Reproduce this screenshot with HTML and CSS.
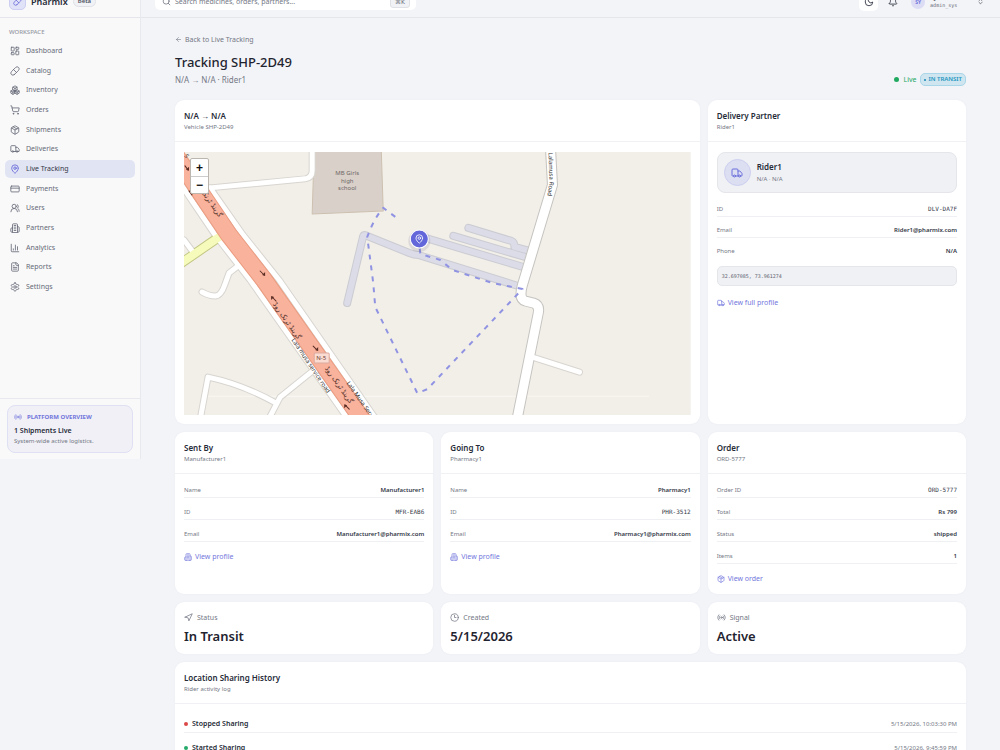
FILE: index.html
```html
<!DOCTYPE html>
<html lang="en">
<head>
<meta charset="utf-8">
<meta name="viewport" content="width=device-width, initial-scale=1">
<title>Pharmix - Live Tracking</title>
<link rel="stylesheet" href="styles.css">
</head>
<body>
<svg class="sprite" aria-hidden="true">
  <symbol id="i-dash" viewBox="0 0 24 24"><rect x="3" y="3" width="7" height="9" rx="1"/><rect x="14" y="3" width="7" height="5" rx="1"/><rect x="14" y="12" width="7" height="9" rx="1"/><rect x="3" y="16" width="7" height="5" rx="1"/></symbol>
  <symbol id="i-pill" viewBox="0 0 24 24"><path d="m10.5 20.5 10-10a4.95 4.95 0 1 0-7-7l-10 10a4.95 4.95 0 1 0 7 7Z"/><path d="m8.500 8.500 7 7"/></symbol>
  <symbol id="i-boxes" viewBox="0 0 24 24"><path d="M3 13.900 7 11.500l5 3v5l-5 3-5-3v-4.500zM7 17l-4.500-2.500M7 17l5-2.500M7 17v5M12 14.500l5-3 5 3v5l-5 3-5-3zM17 17l-5-2.500M17 17l5-2.500M17 17v5M7 5l5-3 5 3v6.500l-5 3-5-3zM12 8 7.300 5.200M12 8l4.700-2.800M12 14V8"/></symbol>
  <symbol id="i-cart" viewBox="0 0 24 24"><circle cx="8" cy="21" r="1"/><circle cx="19" cy="21" r="1"/><path d="M2 2h2l2.700 12.400a2 2 0 0 0 2 1.600h9.800a2 2 0 0 0 2-1.600L22 7H5.100"/></symbol>
  <symbol id="i-package" viewBox="0 0 24 24"><path d="m7.500 4.300 9 5.100"/><path d="M21 8a2 2 0 0 0-1-1.700l-7-4a2 2 0 0 0-2 0l-7 4A2 2 0 0 0 3 8v8a2 2 0 0 0 1 1.700l7 4a2 2 0 0 0 2 0l7-4a2 2 0 0 0 1-1.700Z"/><path d="m3.300 7 8.700 5 8.700-5M12 22V12"/></symbol>
  <symbol id="i-truck" viewBox="0 0 24 24"><path d="M14 18V6a2 2 0 0 0-2-2H4a2 2 0 0 0-2 2v11a1 1 0 0 0 1 1h2M15 18H9M19 18h2a1 1 0 0 0 1-1v-3.600a1 1 0 0 0-.2-.6l-3.500-4.400A1 1 0 0 0 17.500 8H14"/><circle cx="17" cy="18" r="2"/><circle cx="7" cy="18" r="2"/></symbol>
  <symbol id="i-pin" viewBox="0 0 24 24"><path d="M20 10c0 5-5.500 10.200-7.400 11.800a1 1 0 0 1-1.200 0C9.500 20.200 4 15 4 10a8 8 0 0 1 16 0"/><circle cx="12" cy="10" r="3"/></symbol>
  <symbol id="i-card" viewBox="0 0 24 24"><rect x="2" y="5" width="20" height="14" rx="2"/><path d="M2 10h20"/></symbol>
  <symbol id="i-users" viewBox="0 0 24 24"><path d="M18 21a8 8 0 0 0-16 0"/><circle cx="10" cy="8" r="5"/><path d="M22 20c0-3.400-2-6.500-4-8a5 5 0 0 0-.5-8.300"/></symbol>
  <symbol id="i-building" viewBox="0 0 24 24"><path d="M6 22V4a2 2 0 0 1 2-2h8a2 2 0 0 1 2 2v18ZM6 12H4a2 2 0 0 0-2 2v6a2 2 0 0 0 2 2h2M18 9h2a2 2 0 0 1 2 2v9a2 2 0 0 1-2 2h-2M10 6h4M10 10h4M10 14h4M10 18h4"/></symbol>
  <symbol id="i-chart" viewBox="0 0 24 24"><path d="M3 3v16a2 2 0 0 0 2 2h16M18 17V9M13 17V5M8 17v-3"/></symbol>
  <symbol id="i-file" viewBox="0 0 24 24"><path d="M15 2H6a2 2 0 0 0-2 2v16a2 2 0 0 0 2 2h12a2 2 0 0 0 2-2V7Z"/><path d="M14 2v4a2 2 0 0 0 2 2h4M10 9H8M16 13H8M16 17H8"/></symbol>
  <symbol id="i-gear" viewBox="0 0 24 24"><path d="M12.200 2h-.4a2 2 0 0 0-2 2v.2a2 2 0 0 1-1 1.700l-.4.300a2 2 0 0 1-2 0l-.2-.1a2 2 0 0 0-2.700.7l-.2.400a2 2 0 0 0 .7 2.700l.2.100a2 2 0 0 1 1 1.700v.5a2 2 0 0 1-1 1.800l-.2.100a2 2 0 0 0-.7 2.700l.2.400a2 2 0 0 0 2.700.7l.2-.1a2 2 0 0 1 2 0l.4.300a2 2 0 0 1 1 1.700v.2a2 2 0 0 0 2 2h.4a2 2 0 0 0 2-2v-.2a2 2 0 0 1 1-1.700l.4-.3a2 2 0 0 1 2 0l.2.100a2 2 0 0 0 2.700-.7l.2-.4a2 2 0 0 0-.7-2.700l-.2-.1a2 2 0 0 1-1-1.700v-.5a2 2 0 0 1 1-1.800l.2-.1a2 2 0 0 0 .7-2.700l-.2-.4a2 2 0 0 0-2.700-.7l-.2.100a2 2 0 0 1-2 0l-.4-.3a2 2 0 0 1-1-1.700V4a2 2 0 0 0-2-2z"/><circle cx="12" cy="12" r="3"/></symbol>
  <symbol id="i-radio" viewBox="0 0 24 24"><path d="M4.900 19.100C1 15.200 1 8.800 4.900 4.900M7.800 16.200c-2.300-2.300-2.300-6.100 0-8.500M16.200 7.800c2.300 2.300 2.300 6.100 0 8.500M19.100 4.900C23 8.800 23 15.100 19.100 19"/><circle cx="12" cy="12" r="2"/></symbol>
  <symbol id="i-nav" viewBox="0 0 24 24"><path d="m3 11 19-9-9 19-2-8-8-2z"/></symbol>
  <symbol id="i-clock" viewBox="0 0 24 24"><circle cx="12" cy="12" r="10"/><path d="M12 6v6h4"/></symbol>
  <symbol id="i-left" viewBox="0 0 24 24"><path d="m12 19-7-7 7-7M19 12H5"/></symbol>
  <symbol id="i-moon" viewBox="0 0 24 24"><path d="M12 3a6 6 0 0 0 9 9 9 9 0 1 1-9-9Z"/></symbol>
  <symbol id="i-bell" viewBox="0 0 24 24"><path d="M10.300 21a2 2 0 0 0 3.400 0M3.300 15.300A1 1 0 0 0 4 17h16a1 1 0 0 0 .7-1.700C19.400 14 18 12.500 18 8A6 6 0 0 0 6 8c0 4.500-1.400 6-2.700 7.300"/></symbol>
  <symbol id="i-search" viewBox="0 0 24 24"><circle cx="11" cy="11" r="8"/><path d="m21 21-4.300-4.300"/></symbol>
  <symbol id="i-updown" viewBox="0 0 24 24"><path d="m7 15 5 5 5-5M7 9l5-5 5 5"/></symbol>
</svg>

<div class="shell">
  <aside class="sidebar">
    <div class="brand">
      <span class="logo"><svg class="icon"><use href="#i-pill"/></svg></span>
      <strong>Pharmix</strong><span class="beta">Beta</span>
    </div>
    <h2 class="nav-title">WORKSPACE</h2>
    <nav class="nav">
      <a href="#"><svg class="icon"><use href="#i-dash"/></svg>Dashboard</a>
      <a href="#"><svg class="icon"><use href="#i-pill"/></svg>Catalog</a>
      <a href="#"><svg class="icon"><use href="#i-boxes"/></svg>Inventory</a>
      <a href="#"><svg class="icon"><use href="#i-cart"/></svg>Orders</a>
      <a href="#"><svg class="icon"><use href="#i-package"/></svg>Shipments</a>
      <a href="#"><svg class="icon"><use href="#i-truck"/></svg>Deliveries</a>
      <a href="#" class="active" aria-current="page"><svg class="icon"><use href="#i-pin"/></svg>Live Tracking</a>
      <a href="#"><svg class="icon"><use href="#i-card"/></svg>Payments</a>
      <a href="#"><svg class="icon"><use href="#i-users"/></svg>Users</a>
      <a href="#"><svg class="icon"><use href="#i-building"/></svg>Partners</a>
      <a href="#"><svg class="icon"><use href="#i-chart"/></svg>Analytics</a>
      <a href="#"><svg class="icon"><use href="#i-file"/></svg>Reports</a>
      <a href="#"><svg class="icon"><use href="#i-gear"/></svg>Settings</a>
    </nav>
    <div class="side-foot">
      <section class="overview">
        <h3><svg class="icon"><use href="#i-radio"/></svg>PLATFORM OVERVIEW</h3>
        <strong>1 Shipments Live</strong>
        <p>System-wide active logistics.</p>
      </section>
    </div>
  </aside>

  <div class="page">
    <header class="topbar">
      <label class="search"><svg class="icon"><use href="#i-search"/></svg><input type="search" aria-label="Search" placeholder="Search medicines, orders, partners..."><kbd>⌘K</kbd></label>
      <div class="tools">
        <button class="theme" type="button" aria-label="Toggle theme"><svg class="icon"><use href="#i-moon"/></svg></button>
        <button class="plain" type="button" aria-label="Notifications"><svg class="icon"><use href="#i-bell"/></svg></button>
        <button class="user" type="button"><span class="avatar">SY</span><span class="who"><b>System Admin</b><small>admin_sys</small></span><svg class="icon"><use href="#i-updown"/></svg></button>
      </div>
    </header>

    <main class="main">
      <a class="back" href="#"><svg class="icon"><use href="#i-left"/></svg>Back to Live Tracking</a>
      <div class="heading">
        <div><h1>Tracking SHP-2D49</h1><p>N/A → N/A · Rider1</p></div>
        <div class="state"><span class="live">Live</span><span class="badge">IN TRANSIT</span></div>
      </div>

      <div class="grid">
        <section class="card wide">
          <header><h2>N/A → N/A</h2><p>Vehicle SHP-2D49</p></header>
          <div class="map">
            <svg class="map-art" viewBox="0 0 506 263" preserveAspectRatio="xMidYMid slice" role="img" aria-label="Delivery route map">
              <defs>
                <path id="gt" d="M-20-14 16 40 45 83 80 128 175 263 182 273"/>
                <path id="west" d="M-34-14 2 40 31 83 66 128 161 263 168 273"/>
                <path id="east" d="M26 36 59 83 95 128 189 263 196 273"/>
                <g id="lanes">
                  <path d="M26 36 121 27Q128 26 128 19V-4M0 88 9 100M54 114 45 121 41 132Q37 144 31 144 25 144 18 140M16 268 24 225Q58 232 92 251M84 268 96 245 127 220M348 205 395 220"/>
                </g>
                <g id="lots">
                  <path d="M163 151 179 84Q180 82 183 84L225 101Q230 103 234 103L337 135"/><path d="M241 86 342 116M269 84 344 106M284 76 327 89Q330 90 330 95L345 99"/>
                </g>
                <path id="lala" d="M366-4 368 33 338 133Q334 147 341 149L349 151Q355 153 354 160L332 270"/>
                <path id="lalaText" d="M364 1 365 31 360 60"/>
              </defs>
              <rect class="land" width="506" height="263"/>
              <path class="seam" d="M18 244H464"/>
              <path class="school" d="M130-2H197L199 59 128 62Z"/>
              <g class="lots-case"><use href="#lots"/></g><g class="lots-fill"><use href="#lots"/></g>
              <g class="lane-case"><use href="#lanes"/><use href="#west"/><use href="#east"/></g>
              <use class="road-case" href="#lala"/>
              <path class="yellow-case" d="M-4 112 38 83"/>
              <g class="lane-fill"><use href="#lanes"/><use href="#west"/><use href="#east"/></g>
              <use class="road-fill" href="#lala"/>
              <path class="yellow-fill" d="M-4 112 38 83"/>
              <use class="trunk-case" href="#gt"/><use class="trunk-fill" href="#gt"/>
              <g class="arrows">
                <path d="M1 14 4 18M76 119 80 123M92 149 88 145M129 194 133 198M165 257 161 253M8 43 5 39"/>
                <path class="heads" d="M5 19 2 18 5 15ZM81 124 78 123 81 120ZM87 144 90 145 87 148ZM134 199 131 198 134 195ZM160 252 163 253 160 256Z"/>
              </g>
              <g class="urdu">
                <text transform="translate(26 53) rotate(55)">گرینڈ ٹرنک</text>
                <text transform="translate(101 170) rotate(55)">گرینڈ ٹرنک روڈ</text>
                <text transform="translate(153 234) rotate(55)">گرینڈ ٹرنک روڈ</text>
              </g>
              <g class="street">
                <text transform="translate(107 188) rotate(56)">Lala musa service road</text>
                <text transform="translate(162 231) rotate(55)">Lala Musa Service Road</text>
                <text transform="translate(0 4) rotate(55)">S</text>
                <text><textPath href="#lalaText">Lalamusa Road</textPath></text>
              </g>
              <rect class="shield" x="130" y="201" width="15" height="10" rx="1"/>
              <text class="shield-text" x="137" y="208">N-5</text>
              <g class="place"><text x="163" y="23">MB Girls</text><text x="163" y="31">high</text><text x="163" y="38">school</text></g>
              <path class="route" d="M211 65 199 56Q190 66 183 85L189 131 191 155 233 241 243 237 338 137 308 131 268 118 256 108 236 102 235 92"/>
              <circle class="halo" cx="235" cy="89" r="11"/>
              <circle class="marker" cx="235" cy="87" r="9"/>
              <svg class="marker-pin" x="230" y="82" width="10" height="10"><use href="#i-pin"/></svg>
            </svg>
            <div class="zoom"><button type="button" aria-label="Zoom in">+</button><button type="button" aria-label="Zoom out">−</button></div>
          </div>
        </section>

        <section class="card">
          <header><h2>Delivery Partner</h2><p>Rider1</p></header>
          <div class="body">
            <div class="rider"><span class="rider-icon"><svg class="icon"><use href="#i-truck"/></svg></span><div><b>Rider1</b><p>N/A · N/A</p></div></div>
            <dl class="facts tight">
              <div><dt>ID</dt><dd class="mono">DLV-DA7F</dd></div>
              <div><dt>Email</dt><dd>Rider1@pharmix.com</dd></div>
              <div><dt>Phone</dt><dd>N/A</dd></div>
            </dl>
            <div class="coords">32.697085, 73.961274</div>
            <a class="more" href="#"><svg class="icon"><use href="#i-truck"/></svg>View full profile</a>
          </div>
        </section>

        <section class="card">
          <header><h2>Sent By</h2><p>Manufacturer1</p></header>
          <div class="body">
            <dl class="facts">
              <div><dt>Name</dt><dd>Manufacturer1</dd></div>
              <div><dt>ID</dt><dd class="mono">MFR-EAB6</dd></div>
              <div><dt>Email</dt><dd>Manufacturer1@pharmix.com</dd></div>
            </dl>
            <a class="more" href="#"><svg class="icon"><use href="#i-building"/></svg>View profile</a>
          </div>
        </section>
        <section class="card">
          <header><h2>Going To</h2><p>Pharmacy1</p></header>
          <div class="body">
            <dl class="facts">
              <div><dt>Name</dt><dd>Pharmacy1</dd></div>
              <div><dt>ID</dt><dd class="mono">PHR-3512</dd></div>
              <div><dt>Email</dt><dd>Pharmacy1@pharmix.com</dd></div>
            </dl>
            <a class="more" href="#"><svg class="icon"><use href="#i-building"/></svg>View profile</a>
          </div>
        </section>
        <section class="card">
          <header><h2>Order</h2><p>ORD-5777</p></header>
          <div class="body">
            <dl class="facts">
              <div><dt>Order ID</dt><dd class="mono">ORD-5777</dd></div>
              <div><dt>Total</dt><dd>Rs 799</dd></div>
              <div><dt>Status</dt><dd>shipped</dd></div>
              <div><dt>Items</dt><dd>1</dd></div>
            </dl>
            <a class="more" href="#"><svg class="icon"><use href="#i-package"/></svg>View order</a>
          </div>
        </section>

        <section class="card stat"><p><svg class="icon"><use href="#i-nav"/></svg>Status</p><strong>In Transit</strong></section>
        <section class="card stat"><p><svg class="icon"><use href="#i-clock"/></svg>Created</p><strong>5/15/2026</strong></section>
        <section class="card stat"><p><svg class="icon"><use href="#i-radio"/></svg>Signal</p><strong>Active</strong></section>

        <section class="card full">
          <header><h2>Location Sharing History</h2><p>Rider activity log</p></header>
          <ul class="log">
            <li class="stopped"><b>Stopped Sharing</b><time>5/15/2026, 10:03:30 PM</time></li>
            <li class="started"><b>Started Sharing</b><time>5/15/2026, 9:45:59 PM</time></li>
          </ul>
        </section>
      </div>
    </main>
  </div>
</div>
</body>
</html>
```
FILE: styles.css
```css
* { box-sizing: border-box; }
html, body { height: 100%; }
body {
  margin: 0;
  overflow: hidden;
  background: #f3f4f8;
  color: #262b38;
  font-family: "Noto Sans", "Liberation Sans", sans-serif;
  font-size: 7px;
  line-height: 10px;
}
h1, h2, h3, p, dl, dd, ul { margin: 0; padding: 0; }
a { color: inherit; text-decoration: none; }
button { margin: 0; padding: 0; border: 0; background: none; color: inherit; font: inherit; }
.sprite { position: absolute; width: 0; height: 0; }
.icon {
  flex: none;
  width: 9px;
  height: 9px;
  fill: none;
  stroke: currentColor;
  stroke-width: 2;
  stroke-linecap: round;
  stroke-linejoin: round;
}

/* The shell is scrolled slightly past the top of the window */
.shell { display: flex; align-items: flex-start; margin-top: -14px; }
.sidebar { flex: none; width: 141px; background: #f9f9fa; border-right: 1px solid #e8e9ee; }
.page { flex: 1; min-width: 0; }

.brand {
  display: flex;
  align-items: center;
  gap: 5px;
  height: 32px;
  padding: 0 9px;
  border-bottom: 1px solid #e5e6eb;
}
.brand strong { font-size: 9px; font-weight: 600; }
.logo {
  display: grid;
  place-items: center;
  width: 17px;
  height: 17px;
  border: 1px solid #cccff2;
  border-radius: 5px;
  background: #e0e2f7;
  color: #6366d8;
}
.beta {
  padding: 0 4px;
  border: 1px solid #dfe1e7;
  border-radius: 6px;
  background: #f1f2f5;
  font-size: 6px;
  line-height: 9px;
  font-weight: 600;
  color: #4b5160;
}
.nav-title { padding: 9px 9px 4px; font-size: 6px; font-weight: 500; color: #9598a3; }
.nav { display: grid; grid-auto-rows: 1fr; height: 256px; padding: 0 5px; color: #666a77; }
.nav a {
  display: flex;
  align-items: center;
  gap: 6px;
  margin: 1px 0;
  padding: 0 5px;
  border-radius: 5px;
}
.nav .icon { width: 10px; height: 10px; }
.nav .active { background: #e1e4f3; color: #333847; }
.nav .active .icon { color: #6366d8; }
.side-foot { margin-top: 101px; padding: 6px 7px; border-top: 1px solid #e8e9ee; }
.overview {
  padding: 6px;
  border: 1px solid #dfe0f3;
  border-radius: 8px;
  background: #f0f0f6;
}
.overview h3 { display: flex; align-items: center; gap: 5px; font-size: 6px; font-weight: 700; color: #7276dc; }
.overview h3 .icon { width: 8px; height: 8px; }
.overview strong { display: block; margin-top: 4px; font-weight: 600; }
.overview p { font-size: 6px; color: #747885; }

.topbar {
  display: flex;
  align-items: center;
  justify-content: space-between;
  height: 32px;
  padding: 0 18px 0 14px;
  border-bottom: 1px solid #e5e6eb;
}
.search {
  display: flex;
  align-items: center;
  gap: 4px;
  width: 261px;
  height: 17px;
  padding: 0 6px 0 7px;
  border-radius: 5px;
  background: #fff;
  color: #6b6f7c;
}
.search input { flex: 1; min-width: 0; padding: 0; border: 0; outline: 0; background: none; font: inherit; color: inherit; }
.search input::placeholder { color: #747885; opacity: 1; }
.search kbd {
  padding: 0 4px;
  border: 1px solid #dfe1e7;
  border-radius: 3px;
  background: #f1f2f5;
  font: 6px/10px "DejaVu Sans", sans-serif;
}
.tools { display: flex; align-items: center; gap: 10px; }
.tools .icon { width: 10px; height: 10px; }
.theme { display: grid; place-items: center; width: 19px; height: 19px; border-radius: 5px; background: #fff; }
.plain { display: grid; place-items: center; }
.user { display: flex; align-items: center; gap: 5px; margin-left: 3px; text-align: left; }
.user .icon { width: 7px; height: 7px; }
.avatar {
  display: grid;
  place-items: center;
  width: 14px;
  height: 14px;
  border-radius: 7px;
  background: #dcddf5;
  color: #6366d8;
  font-size: 5px;
  font-weight: 600;
}
.who { display: grid; }
.who b { font-size: 6px; line-height: 7px; font-weight: 600; }
.who small { font: 5px/6px "DejaVu Sans Mono", monospace; color: #666a77; }
.tools .user { margin-right: -2px; }

.main { padding: 16px 34px; }
.back { display: flex; align-items: center; gap: 3px; line-height: 11px; color: #747885; }
.back .icon { width: 7px; height: 7px; }
.heading { display: flex; justify-content: space-between; align-items: flex-end; margin: 8px 0 14px; }
.heading h1 { font-size: 13px; line-height: 19px; font-weight: 500; color: #1f2430; }
.heading p { margin-top: 2px; font-size: 8px; line-height: 12px; color: #747885; }
.state { display: flex; align-items: center; gap: 4px; }
.live { display: flex; align-items: center; gap: 4px; color: #22a862; }
.live::before { content: ""; width: 5px; height: 5px; border-radius: 50%; background: #20a960; }
.badge {
  display: flex;
  align-items: center;
  gap: 2px;
  padding: 0 3px;
  border: 1px solid #a9d6e8;
  border-radius: 5px;
  background: #cfe5ef;
  color: #2597c2;
  font-size: 6px;
  line-height: 11px;
  font-weight: 600;
}
.badge::before { content: ""; width: 2px; height: 2px; border-radius: 50%; background: #1789b8; }

.grid { display: grid; grid-template-columns: repeat(3, minmax(0, 1fr)); gap: 8px; }
.card { border-radius: 9px; background: #fff; box-shadow: 0 0 2px #e8eaf0; }
.wide { grid-column: span 2; }
.full { grid-column: 1 / -1; }
.card > header { padding: 10px 9px 8px; border-bottom: 1px solid #f0f1f4; }
.card h2 { font-size: 8px; line-height: 11px; font-weight: 600; }
.card header p { margin-top: 1px; font-size: 6px; line-height: 11px; color: #747885; }
.body { padding: 9px; }

.map { position: relative; margin: 10px 9px 9px; }
.map-art { display: block; width: 100%; height: 263px; }
.land { fill: #f2efe9; }
.seam { stroke: #faf8f4; }
.school { fill: #d9d0c9; stroke: #cdc0b0; stroke-width: 1; }
.map-art path, .map-art use { stroke-linecap: round; stroke-linejoin: round; }
.lots-case, .lots-fill, .lane-case, .lane-fill, .road-case, .road-fill, .trunk-case, .trunk-fill, .route, .arrows { fill: none; }
.lots-case { stroke: #cbcbd2; stroke-width: 8px; }
.lots-fill { stroke: #dcdce8; stroke-width: 6px; }
.lane-case { stroke: #d8d5d0; stroke-width: 7px; }
.lane-fill { stroke: #fff; stroke-width: 5px; }
.road-case { stroke: #c6c4c0; stroke-width: 11px; }
.road-fill { stroke: #fff; stroke-width: 9px; }
.yellow-case { stroke: #c3c684; stroke-width: 10px; }
.yellow-fill { stroke: #f6fabb; stroke-width: 8px; }
.trunk-case { stroke: #eb9c81; stroke-width: 18px; }
.trunk-fill { stroke: #f9b29c; stroke-width: 16px; }
.arrows { stroke: #5b2d24; stroke-width: 1; }
.heads { fill: #5b2d24; stroke: none; }
.urdu { font: 7px "DejaVu Sans", sans-serif; fill: #4b2b25; text-anchor: middle; }
.street { font-size: 6px; fill: #33312f; }
.shield { fill: #fbdcd2; stroke: #dcaa9d; }
.shield-text { font-size: 6px; text-anchor: middle; fill: #6d3e34; }
.place { font-size: 6px; text-anchor: middle; fill: #6d6866; }
.map-art .route { stroke: #9093e2; stroke-width: 2px; stroke-dasharray: 5 6; stroke-linecap: butt; }
.halo { fill: #5b5f7a; opacity: .15; }
.marker { fill: #6367d9; stroke: #fff; stroke-width: 1; }
.marker-pin { fill: none; stroke: #fff; stroke-width: 2; }
.zoom {
  position: absolute;
  top: 6px;
  left: 6px;
  display: grid;
  border: 1px solid #bcb6b0;
  border-radius: 2px;
  background: #fff;
}
.zoom button { width: 17px; height: 17px; font: bold 12px/16px "Liberation Sans", sans-serif; color: #111; }
.zoom button + button { border-top: 1px solid #ccc; }

.rider {
  display: flex;
  align-items: center;
  gap: 6px;
  margin-bottom: 9px;
  padding: 6px;
  border: 1px solid #e4e6ea;
  border-radius: 8px;
  background: #f0f1f5;
}
.rider-icon {
  display: grid;
  place-items: center;
  width: 27px;
  height: 27px;
  border: 1px solid #cccff0;
  border-radius: 50%;
  background: #dcdef1;
  color: #6b6fdc;
}
.rider-icon .icon { width: 12px; height: 12px; }
.rider b { font-size: 8px; font-weight: 600; }
.rider p { margin-top: 1px; font-size: 6px; color: #747885; }
.facts { display: grid; gap: 7px; }
.facts div { display: flex; justify-content: space-between; border-bottom: 1px solid #eff0f3; font-size: 6px; line-height: 14px; }
.facts dt { color: #747885; }
.facts dd { font-weight: 600; color: #333847; }
.facts .mono { font-family: "DejaVu Sans Mono", monospace; font-weight: 400; }
.tight { gap: 6px; }
.tight div:last-child { border-bottom: 0; }
.coords {
  margin: 8px 0 10px;
  padding: 0 4px;
  border: 1px solid #e4e6ea;
  border-radius: 5px;
  background: #f0f1f5;
  font: 5px/18px "DejaVu Sans Mono", monospace;
  color: #5b606d;
}
.more { display: flex; align-items: center; gap: 3px; line-height: 14px; color: #7377dd; }
.more .icon { width: 8px; height: 8px; }
.facts + .more { margin-top: 8px; }
.body:has(.facts + .more) { padding-bottom: 8px; }
.body:has(.rider) { padding-top: 10px; }

.stat { padding: 9px; }
.stat p { display: flex; align-items: center; gap: 4px; line-height: 13px; color: #747885; }
.stat strong { display: block; margin-top: 3px; font-size: 13px; line-height: 18px; font-weight: 600; color: #1f2430; }

.log { padding: 5px 9px; list-style: none; }
.log li { display: flex; align-items: center; gap: 4px; height: 24px; padding-top: 6px; border-bottom: 1px solid #eff0f3; }
.log li::before { content: ""; width: 4px; height: 4px; border-radius: 50%; background: #25aa6a; }
.log .stopped::before { background: #dc4848; }
.log b { font-weight: 600; }
.log time { margin-left: auto; font-size: 6px; color: #747885; }
```
